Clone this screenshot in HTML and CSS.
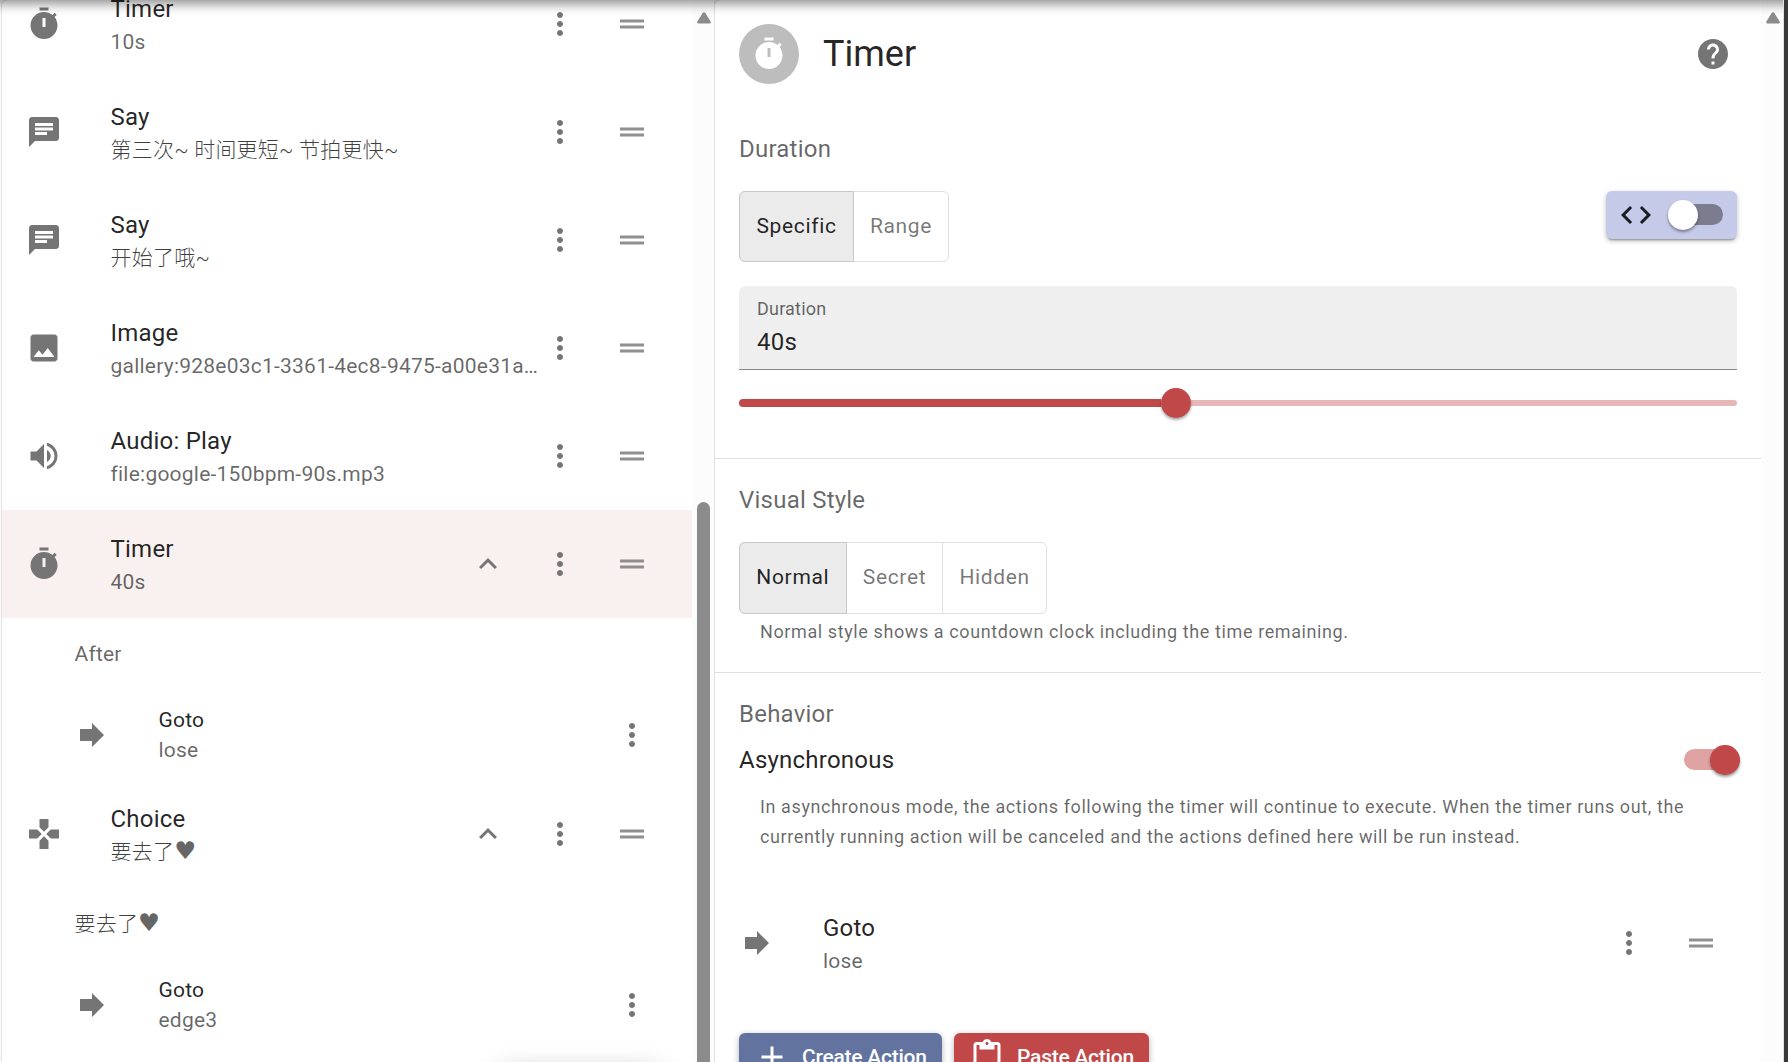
FILE: index.html
```
<!DOCTYPE html>
<html lang="en">
<head>
<meta charset="utf-8">
<title>Timer</title>
<link rel="stylesheet" href="styles.css">
</head>
<body>
<svg class="sprite" aria-hidden="true">
  <symbol id="timer" viewBox="0 0 24 24"><path fill-rule="evenodd" d="M15 1H9v2h6V1zm-4 13h2V8h-2v6zm8.03-6.61l1.42-1.42c-.43-.51-.9-.99-1.41-1.41l-1.42 1.42C16.07 4.74 14.12 4 12 4c-4.97 0-9 4.03-9 9s4.02 9 9 9 9-4.03 9-9c0-2.12-.74-4.07-1.97-5.61z"/></symbol>
  <symbol id="chat" viewBox="0 0 24 24"><path d="M20 2H4c-1.1 0-1.99.9-1.99 2L2 22l4-4h14c1.1 0 2-.9 2-2V4c0-1.100-.9-2-2-2zM6 9h12v2H6V9zm8 5H6v-2h8v2zm4-6H6V6h12v2z"/></symbol>
  <symbol id="image" viewBox="0 0 24 24"><path d="M21 19V5c0-1.100-.9-2-2-2H5c-1.100 0-2 .9-2 2v14c0 1.100.9 2 2 2h14c1.100 0 2-.9 2-2zM8.500 13.500l2.500 3.010L14.500 12l4.500 6H5l3.500-4.500z"/></symbol>
  <symbol id="volume" viewBox="0 0 24 24"><path d="M3 9v6h4l5 5V4L7 9H3zm13.500 3c0-1.770-1.020-3.290-2.500-4.030v8.050c1.480-.73 2.500-2.250 2.500-4.020zM14 3.230v2.060c2.890.86 5 3.540 5 6.710s-2.110 5.850-5 6.710v2.060c4.010-.91 7-4.490 7-8.770s-2.990-7.860-7-8.770z"/></symbol>
  <symbol id="gamepad" viewBox="0 0 24 24"><path d="M15 7.500V2H9v5.500l3 3 3-3zM7.500 9H2v6h5.500l3-3-3-3zM9 16.500V22h6v-5.500l-3-3-3 3zM16.500 9l-3 3 3 3H22V9h-5.500z"/></symbol>
  <symbol id="forward" viewBox="0 0 24 24"><path d="M12 8V4l8 8-8 8v-4H4V8z"/></symbol>
  <symbol id="more" viewBox="0 0 24 24"><path d="M12 8c1.100 0 2-.9 2-2s-.9-2-2-2-2 .9-2 2 .9 2 2 2zm0 2c-1.100 0-2 .9-2 2s.9 2 2 2 2-.9 2-2-.9-2-2-2zm0 6c-1.100 0-2 .9-2 2s.9 2 2 2 2-.9 2-2-.9-2-2-2z"/></symbol>
  <symbol id="drag" viewBox="0 0 24 24"><path d="M20 9H4v2h16V9zM4 15h16v-2H4v2z"/></symbol>
  <symbol id="up" viewBox="0 0 24 24"><path d="M7.410 15.410L12 10.830l4.590 4.580L18 14l-6-6-6 6z"/></symbol>
  <symbol id="help" viewBox="0 0 24 24"><path d="M12 2C6.480 2 2 6.480 2 12s4.480 10 10 10 10-4.480 10-10S17.520 2 12 2zm1 17h-2v-2h2v2zm2.070-7.750l-.9.920C13.450 12.900 13 13.500 13 15h-2v-.5c0-1.100.45-2.100 1.170-2.830l1.240-1.260c.37-.36.59-.86.59-1.410 0-1.100-.9-2-2-2s-2 .9-2 2H8c0-2.210 1.790-4 4-4s4 1.790 4 4c0 .88-.36 1.680-.93 2.250z"/></symbol>
  <symbol id="code" viewBox="0 0 24 24"><path d="M9.400 16.600L4.800 12l4.600-4.600L8 6l-6 6 6 6 1.400-1.400zm5.200 0l4.600-4.600-4.600-4.600L16 6l6 6-6 6-1.400-1.400z"/></symbol>
  <symbol id="add" viewBox="0 0 24 24"><path d="M19 13h-6v6h-2v-6H5v-2h6V5h2v6h6v2z"/></symbol>
  <symbol id="paste" viewBox="0 0 24 24"><path d="M19 2h-4.180C14.400.84 13.300 0 12 0c-1.300 0-2.400.84-2.820 2H5c-1.100 0-2 .9-2 2v16c0 1.100.9 2 2 2h14c1.100 0 2-.9 2-2V4c0-1.100-.9-2-2-2zm-7 0c.55 0 1 .45 1 1s-.45 1-1 1-1-.45-1-1 .45-1 1-1zm7 18H5V4h2v3h10V4h2v16z"/></symbol>
  <symbol id="arrow" viewBox="0 0 14 12"><path d="M5.500 1.200Q7-.5 8.500 1.200L13.600 9.500Q14.200 11.500 12.500 11.500H1.500Q-.2 11.500.4 9.500Z"/></symbol>
</svg>

<div class="app">
  <section class="panel script">
    <div class="list">
      <div class="row"><svg class="icon"><use href="#timer"/></svg><div class="text"><div class="title">Timer</div><div class="sub">10s</div></div><div class="meta"><span><svg class="icon"><use href="#more"/></svg></span><span><svg class="icon drag"><use href="#drag"/></svg></span></div></div>
      <div class="row"><svg class="icon"><use href="#chat"/></svg><div class="text"><div class="title">Say</div><div class="sub cjk">第三次~ 时间更短~ 节拍更快~</div></div><div class="meta"><span><svg class="icon"><use href="#more"/></svg></span><span><svg class="icon drag"><use href="#drag"/></svg></span></div></div>
      <div class="row"><svg class="icon"><use href="#chat"/></svg><div class="text"><div class="title">Say</div><div class="sub cjk">开始了哦~</div></div><div class="meta"><span><svg class="icon"><use href="#more"/></svg></span><span><svg class="icon drag"><use href="#drag"/></svg></span></div></div>
      <div class="row"><svg class="icon"><use href="#image"/></svg><div class="text"><div class="title">Image</div><div class="sub">gallery:928e03c1-3361-4ec8-9475-a00e31a…</div></div><div class="meta"><span><svg class="icon"><use href="#more"/></svg></span><span><svg class="icon drag"><use href="#drag"/></svg></span></div></div>
      <div class="row"><svg class="icon"><use href="#volume"/></svg><div class="text"><div class="title">Audio: Play</div><div class="sub">file:google-150bpm-90s.mp3</div></div><div class="meta"><span><svg class="icon"><use href="#more"/></svg></span><span><svg class="icon drag"><use href="#drag"/></svg></span></div></div>
      <div class="row selected"><svg class="icon"><use href="#timer"/></svg><div class="text"><div class="title">Timer</div><div class="sub">40s</div></div><div class="meta"><span><svg class="icon"><use href="#up"/></svg></span><span><svg class="icon"><use href="#more"/></svg></span><span><svg class="icon drag"><use href="#drag"/></svg></span></div></div>
      <div class="group">After</div>
      <div class="row nested"><svg class="icon"><use href="#forward"/></svg><div class="text"><div class="title">Goto</div><div class="sub">lose</div></div><div class="meta"><span><svg class="icon"><use href="#more"/></svg></span></div></div>
      <div class="row"><svg class="icon"><use href="#gamepad"/></svg><div class="text"><div class="title">Choice</div><div class="sub cjk">要去了<span class="heart">♥</span></div></div><div class="meta"><span><svg class="icon"><use href="#up"/></svg></span><span><svg class="icon"><use href="#more"/></svg></span><span><svg class="icon drag"><use href="#drag"/></svg></span></div></div>
      <div class="group cjk">要去了<span class="heart">♥</span></div>
      <div class="row nested"><svg class="icon"><use href="#forward"/></svg><div class="text"><div class="title">Goto</div><div class="sub">edge3</div></div><div class="meta"><span><svg class="icon"><use href="#more"/></svg></span></div></div>
    </div>
    <div class="scrollbar"><svg class="arrow"><use href="#arrow"/></svg><div class="thumb"></div></div>
    <div class="fab"></div>
  </section>

  <section class="panel editor">
    <div class="content">
      <header class="head">
        <div class="avatar"><svg class="icon"><use href="#timer"/></svg></div>
        <h1>Timer</h1>
        <svg class="icon help"><use href="#help"/></svg>
      </header>

      <div class="section duration">
        <h2>Duration</h2>
        <div class="line">
          <div class="segmented"><button class="on w-specific">Specific</button><button class="w-range">Range</button></div>
          <div class="codebox"><svg class="icon"><use href="#code"/></svg><div class="switch"></div></div>
        </div>
        <div class="field"><label>Duration</label><div class="value">40s</div></div>
        <div class="slider"><div class="fill"></div><div class="knob"></div><div class="rest"></div></div>
      </div>

      <div class="section visual">
        <h2>Visual Style</h2>
        <div class="segmented"><button class="on w-normal">Normal</button><button class="w-secret">Secret</button><button class="w-hidden">Hidden</button></div>
        <p class="helper">Normal style shows a countdown clock including the time remaining.</p>
      </div>

      <div class="section behavior">
        <h2>Behavior</h2>
        <div class="async"><span>Asynchronous</span><div class="switch on"></div></div>
        <p class="helper">In asynchronous mode, the actions following the timer will continue to execute. When the timer runs out, the<br>currently running action will be canceled and the actions defined here will be run instead.</p>
        <div class="row"><svg class="icon"><use href="#forward"/></svg><div class="text"><div class="title">Goto</div><div class="sub">lose</div></div><div class="meta"><span><svg class="icon"><use href="#more"/></svg></span><span><svg class="icon drag"><use href="#drag"/></svg></span></div></div>
        <div class="actions">
          <button class="create"><svg class="icon"><use href="#add"/></svg>Create Action</button>
          <button class="paste"><svg class="icon"><use href="#paste"/></svg>Paste Action</button>
        </div>
      </div>
    </div>
    <div class="scrollbar"><svg class="arrow"><use href="#arrow"/></svg></div>
  </section>
  <div class="edge"></div>
  <div class="topshade"></div>
</div>
</body>
</html>
```
FILE: styles.css
```
* { box-sizing: border-box; }
body {
  margin: 0;
  font-family: Roboto, "Noto Sans CJK SC", sans-serif;
  color: rgba(0, 0, 0, .87);
  background: #fff;
}
h1, h2, p { margin: 0; font-weight: 400; }
button { font-family: inherit; }
.sprite { position: absolute; width: 0; height: 0; }
.app {
  position: relative;
  display: flex;
  width: 1788px;
  height: 1062px;
  overflow: hidden;
  background: #fafafa;
}
.icon { width: 36px; height: 36px; flex: none; fill: #757575; display: block; }
.icon.drag { opacity: .8; }

/* Panels */
.panel { display: flex; height: 1062px; overflow: hidden; background: #fff; border-radius: 6px 0 0 0; position: relative; }
.script { width: 712px; margin-left: 2px; box-shadow: 0 0 0 1px #e4e4e4; }
.editor { width: 1068px; margin-left: 1px; box-shadow: 0 0 0 1px #e0e0e0; }
.scrollbar { width: 22px; flex: none; background: #fcfcfc; padding: 12px 4px 0 4px; }
.arrow { display: block; width: 14px; height: 12px; margin: 0 0 0 .5px; fill: #8b8b8b; }
.thumb { width: 13px; height: 600px; margin: 478px 0 0 1px; border-radius: 7px; background: #8b8b8b; }
.edge { width: 5px; background: #373838; border-left: 1px solid #8b8b8b; }
.topshade {
  position: absolute; left: 0; top: 0; width: 1783px; height: 16px;
  background: linear-gradient(rgba(0,0,0,.34), rgba(0,0,0,.22) 25%, rgba(0,0,0,.08) 55%, rgba(0,0,0,.02) 80%, transparent);
}
.fab { position: absolute; left: 484px; top: 1070px; width: 188px; height: 60px; border-radius: 30px; box-shadow: 0 0 26px rgba(0,0,0,.22); }

/* Action list */
.list { width: 690px; height: 1080px; margin-top: -30px; flex: none; }
.row { display: flex; align-items: center; height: 108px; padding: 0 24px; }
.row .text { width: 0; flex: 1; margin-left: 48px; align-self: flex-start; white-space: nowrap; }
.list .text { padding-left: .5px; }
.title { font-size: 24px; line-height: 30px; letter-spacing: .225px; padding-top: 24px; }
.sub { font-size: 21px; line-height: 30px; letter-spacing: .23px; color: rgba(0,0,0,.6); margin-top: 3px; }
.meta { display: flex; }
.meta span { width: 72px; height: 72px; display: grid; place-items: center; }
.selected { background: #f9f1f0; }
.group { height: 72px; padding-left: 72.500px; font-size: 21px; line-height: 72px; letter-spacing: .2px; color: rgba(0,0,0,.6); }
.nested { height: 90px; padding-left: 72px; }
.nested .title { font-size: 21px; padding-top: 15px; }
.nested .sub { margin-top: 0; }
.cjk { font-weight: 300; color: rgba(0,0,0,.75); }
.heart { font-family: "DejaVu Sans", sans-serif; font-size: 24.500px; font-weight: 400; line-height: 1; color: #666; }

/* Editor */
.content { width: 1046px; flex: none; }
.head { display: flex; align-items: center; height: 108px; padding: 0 30px 0 24px; }
.avatar { width: 60px; height: 60px; border-radius: 50%; background: #bdbdbd; display: grid; place-items: center; }
.avatar .icon { fill: #fff; }
h1 { flex: 1; margin-left: 24px; font-size: 36px; line-height: 48px; }
.section { padding: 0 24px; }
h2 { font-size: 24px; line-height: 30px; letter-spacing: .225px; color: rgba(0,0,0,.6); }
.duration { height: 350px; padding-top: 26px; }
.line { display: flex; justify-content: space-between; align-items: flex-start; margin-top: 27px; }
.duration .line { height: 95px; }
.segmented { display: inline-flex; height: 71px; border: 1px solid #e0e0e0; border-radius: 6px; }
.segmented button { border: 0; border-left: 1px solid #e0e0e0; background: transparent; padding: 0 0 1px; font-size: 21px; letter-spacing: .65px; color: rgba(0,0,0,.54); }
.segmented button:first-child { border-left: 0; }
.segmented .on { margin: -1px 0 -1px -1px; border: 1px solid #c8c8c8; border-radius: 6px 0 0 6px; background: #ebebeb; color: rgba(0,0,0,.87); }
.segmented .on:first-child { border-left: 1px solid #c8c8c8; }
.segmented .on + button { border-left: 0; }
.w-specific { width: 115px; } .w-range { width: 94px; }
.w-normal { width: 108px; } .w-secret { width: 95px; } .w-hidden { width: 104px; }
.codebox { display: flex; align-items: center; gap: 15px; width: 131px; height: 48px; padding-left: 12px; border-radius: 6px; background: #c5cae9; box-shadow: 0 3px 2px -2px rgba(0,0,0,.3), 0 2px 5px rgba(0,0,0,.25); }
.codebox .icon { fill: #1b1b1f; }
.switch { position: relative; width: 54px; height: 21px; margin-bottom: 1px; border-radius: 11px; background: #7b7d8f; }
.switch::after { content: ""; position: absolute; left: -1px; top: -4px; width: 30px; height: 30px; border-radius: 50%; background: #fff; box-shadow: 0 2px 3px rgba(0,0,0,.4); }
.switch.on { margin: 0 -1px 1px 0; background: #e0a3a3; }
.switch.on::after { left: 26px; background: #c04848; }
.field { height: 84px; padding: 13px 18px 0; border-radius: 6px 6px 0 0; background: #efefef; border-bottom: 1px solid #868686; }
.field label { display: block; font-size: 18px; line-height: 20px; letter-spacing: .2px; color: rgba(0,0,0,.6); }
.value { font-size: 24px; line-height: 30px; letter-spacing: .225px; margin-top: 8px; }
.slider { display: flex; align-items: center; height: 30px; margin-top: 18px; }
.fill { width: 422px; height: 8px; border-radius: 4px 0 0 4px; background: #c04848; }
.knob { width: 30px; height: 30px; border-radius: 50%; background: #c04848; box-shadow: 0 2px 3px rgba(0,0,0,.35); z-index: 1; }
.rest { flex: 1; height: 6px; border-radius: 0 3px 3px 0; background: #e6b7b7; }
.visual, .behavior { border-top: 1px solid #e0e0e0; }
.visual { height: 214px; padding-top: 26px; }
.visual .segmented { display: flex; width: 308px; height: 72px; margin-top: 27px; }
.visual .segmented button { padding-bottom: 2px; }
.visual .w-secret { width: 96px; }
.helper { font-size: 18px; line-height: 30px; letter-spacing: .6px; color: rgba(0,0,0,.6); padding-left: 21px; margin-top: 3px; white-space: nowrap; }
.behavior { padding-top: 26px; }
.async { display: flex; align-items: center; justify-content: space-between; height: 30px; margin-top: 16px; font-size: 24px; letter-spacing: .225px; }
.behavior .helper { margin-top: 17px; }
.behavior .row { padding: 0; margin-top: 37px; }
.actions { display: flex; gap: 12px; margin-top: 36px; }
.actions button { display: flex; align-items: center; height: 48px; border: 0; border-radius: 6px; padding: 0; color: #fff; font-size: 21px; font-weight: 500; letter-spacing: -.24px; white-space: nowrap; box-shadow: 0 2px 6px rgba(0,0,0,.3); }
.actions .icon { fill: #fff; margin: 0 12px 0 15px; }
.create { width: 203px; background: #62739f; }
.paste { width: 195px; background: #c04848; }
```
